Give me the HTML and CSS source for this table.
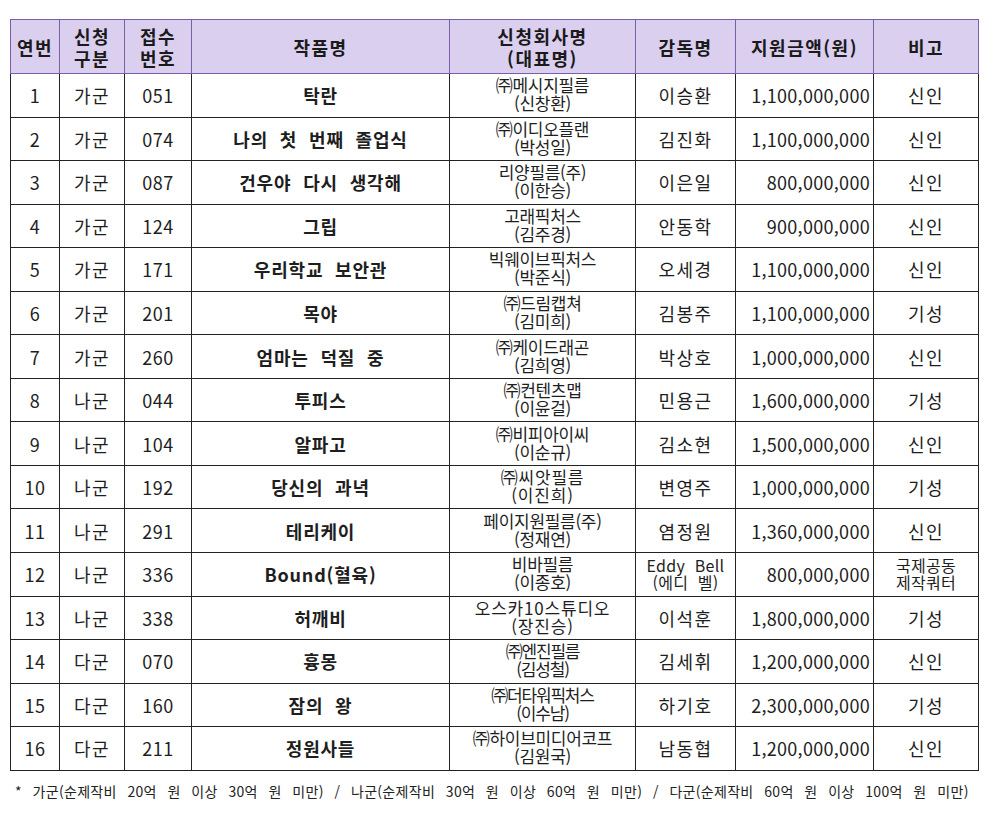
FILE: index.html
```html
<!DOCTYPE html>
<html lang="ko">
<head>
<meta charset="utf-8">
<link rel="stylesheet" href="styles.css">
</head>
<body>
<table class="grid">
<colgroup>
<col class="c1"><col class="c2"><col class="c3"><col class="c4"><col class="c5"><col class="c6"><col class="c7"><col class="c8">
</colgroup>
<thead>
<tr>
<th>연번</th><th>신청<br>구분</th><th>접수<br>번호</th><th>작품명</th><th>신청회사명<br>(대표명)</th><th>감독명</th><th>지원금액(원)</th><th>비고</th>
</tr>
</thead>
<tbody>
<tr><td>1</td><td class="ko">가군</td><td>051</td><td class="title">탁란</td><td class="co">㈜메시지필름<br>(신창환)</td><td class="ko">이승환</td><td class="amt">1,100,000,000</td><td class="ko">신인</td></tr>
<tr><td>2</td><td class="ko">가군</td><td>074</td><td class="title">나의 첫 번째 졸업식</td><td class="co">㈜이디오플랜<br>(박성일)</td><td class="ko">김진화</td><td class="amt">1,100,000,000</td><td class="ko">신인</td></tr>
<tr><td>3</td><td class="ko">가군</td><td>087</td><td class="title">건우야 다시 생각해</td><td class="co">리양필름(주)<br>(이한승)</td><td class="ko">이은일</td><td class="amt">800,000,000</td><td class="ko">신인</td></tr>
<tr><td>4</td><td class="ko">가군</td><td>124</td><td class="title">그립</td><td class="co">고래픽처스<br>(김주경)</td><td class="ko">안동학</td><td class="amt">900,000,000</td><td class="ko">신인</td></tr>
<tr><td>5</td><td class="ko">가군</td><td>171</td><td class="title">우리학교 보안관</td><td class="co">빅웨이브픽처스<br>(박준식)</td><td class="ko">오세경</td><td class="amt">1,100,000,000</td><td class="ko">신인</td></tr>
<tr><td>6</td><td class="ko">가군</td><td>201</td><td class="title">목야</td><td class="co">㈜드림캡쳐<br>(김미희)</td><td class="ko">김봉주</td><td class="amt">1,100,000,000</td><td class="ko">기성</td></tr>
<tr><td>7</td><td class="ko">가군</td><td>260</td><td class="title">엄마는 덕질 중</td><td class="co">㈜케이드래곤<br>(김희영)</td><td class="ko">박상호</td><td class="amt">1,000,000,000</td><td class="ko">신인</td></tr>
<tr><td>8</td><td class="ko">나군</td><td>044</td><td class="title">투피스</td><td class="co">㈜컨텐츠맵<br>(이윤걸)</td><td class="ko">민용근</td><td class="amt">1,600,000,000</td><td class="ko">기성</td></tr>
<tr><td>9</td><td class="ko">나군</td><td>104</td><td class="title">알파고</td><td class="co">㈜비피아이씨<br>(이순규)</td><td class="ko">김소현</td><td class="amt">1,500,000,000</td><td class="ko">신인</td></tr>
<tr><td>10</td><td class="ko">나군</td><td>192</td><td class="title">당신의 과녁</td><td class="co wide">㈜씨앗필름<br>(이진희)</td><td class="ko">변영주</td><td class="amt">1,000,000,000</td><td class="ko">기성</td></tr>
<tr><td>11</td><td class="ko">나군</td><td>291</td><td class="title">테리케이</td><td class="co">페이지원필름(주)<br>(정재연)</td><td class="ko">염정원</td><td class="amt">1,360,000,000</td><td class="ko">신인</td></tr>
<tr><td>12</td><td class="ko">나군</td><td>336</td><td class="title">Bound(혈육)</td><td class="co">비바필름<br>(이종호)</td><td class="two">Eddy&nbsp;&nbsp;Bell<br>(에디&nbsp;&nbsp;벨)</td><td class="amt">800,000,000</td><td class="two">국제공동<br>제작쿼터</td></tr>
<tr><td>13</td><td class="ko">나군</td><td>338</td><td class="title">허깨비</td><td class="co wide">오스카10스튜디오<br>(장진승)</td><td class="ko">이석훈</td><td class="amt">1,800,000,000</td><td class="ko">기성</td></tr>
<tr><td>14</td><td class="ko">다군</td><td>070</td><td class="title">흉몽</td><td class="co tight">㈜엔진필름<br>(김성철)</td><td class="ko">김세휘</td><td class="amt">1,200,000,000</td><td class="ko">신인</td></tr>
<tr><td>15</td><td class="ko">다군</td><td>160</td><td class="title">잠의 왕</td><td class="co tight">㈜더타워픽처스<br>(이수남)</td><td class="ko">하기호</td><td class="amt">2,300,000,000</td><td class="ko">기성</td></tr>
<tr><td>16</td><td class="ko">다군</td><td>211</td><td class="title">정원사들</td><td class="co">㈜하이브미디어코프<br>(김원국)</td><td class="ko">남동협</td><td class="amt">1,200,000,000</td><td class="ko">신인</td></tr>
</tbody>
</table>
<p class="note">* 가군(순제작비 20억 원 이상 30억 원 미만) / 나군(순제작비 30억 원 이상 60억 원 미만) / 다군(순제작비 60억 원 이상 100억 원 미만)</p>
</body>
</html>
```
FILE: styles.css
```css
html, body {
  margin: 0;
  padding: 0;
  background: #ffffff;
}
body {
  padding: 19px 0 0 10px;
  font-family: "Noto Sans CJK KR", "Noto Sans", sans-serif;
  color: #1e1e1e;
}
.grid {
  border-collapse: collapse;
  table-layout: fixed;
  width: 968px;
  border-left: 1.5px solid #7a64a0;
  border-right: 1.5px solid #222;
  border-bottom: 1.5px solid #333;
}
.c1 { width: 49px; }
.c2 { width: 65px; }
.c3 { width: 67px; }
.c4 { width: 258px; }
.c5 { width: 186px; }
.c6 { width: 100px; }
.c7 { width: 138px; }
.c8 { width: 105px; }
th {
  background: #dacfee;
  border: 1.5px solid #7a5fa8;
  height: 53px;
  padding: 0;
  font-size: 18px;
  font-weight: 700;
  line-height: 22px;
  letter-spacing: 1.5px;
  color: #1a1a1a;
}
td {
  border: 1.5px solid #222;
  height: 40.56px;
  padding: 0;
  text-align: center;
  font-size: 18px;
  line-height: 20px;
  letter-spacing: 0.5px;
}
td.ko {
  letter-spacing: 1.5px;
}
td.title {
  font-weight: 700;
  letter-spacing: 0.8px;
  word-spacing: 6px;
}
td.co {
  font-size: 17px;
  line-height: 18px;
  letter-spacing: -0.3px;
  padding-bottom: 2px;
}
td.co.wide {
  letter-spacing: 0.8px;
}
td.co.tight {
  letter-spacing: -1.2px;
}
td.amt {
  text-align: right;
  padding-right: 3px;
  letter-spacing: 0.3px;
}
td.two {
  font-size: 16px;
  line-height: 17px;
  letter-spacing: 0.3px;
}
.note {
  margin: 10px 0 0 5px;
  font-size: 14px;
  letter-spacing: 0.3px;
  word-spacing: 6.5px;
  color: #222;
}
```
